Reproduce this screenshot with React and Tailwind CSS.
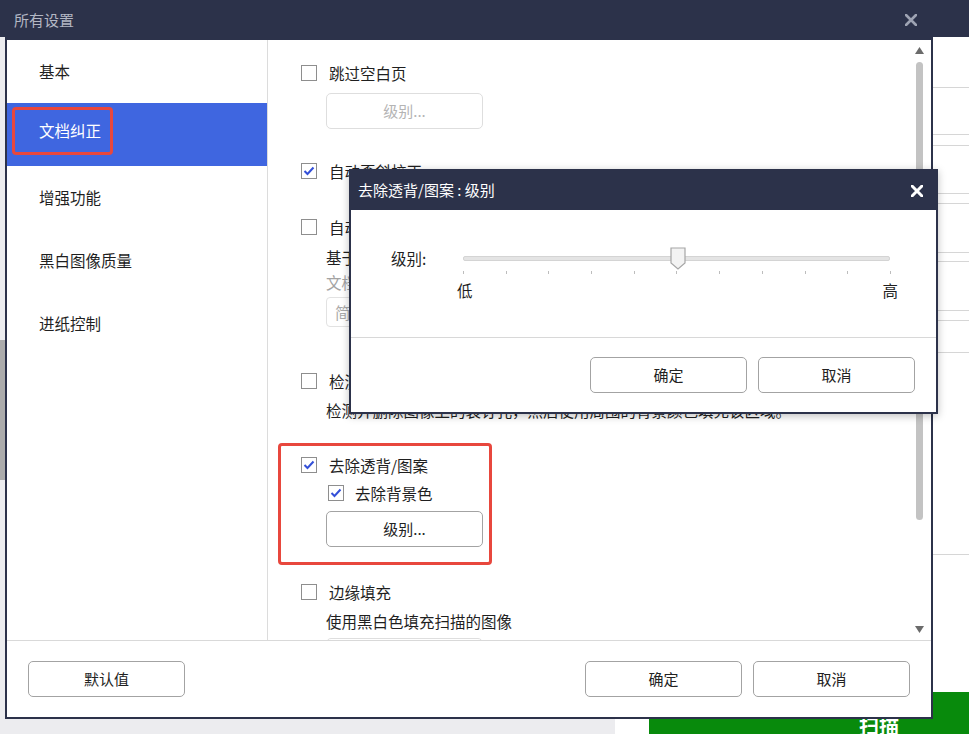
import React from "react";

const NAVY = "bg-[#2c324a]";

function Check({ checked }) {
  return (
    <span className="w-4 h-4 shrink-0 border-[1.5px] border-[#8e8e8e] bg-white flex items-center justify-center">
      {checked && (
        <svg width="12" height="10" viewBox="0 0 12 10">
          <path d="M1.5 5 L4.5 8 L10.5 1.5" fill="none" stroke="#3450d8" strokeWidth="2" />
        </svg>
      )}
    </span>
  );
}

function Btn({ children, disabled, className = "" }) {
  return (
    <div
      className={
        "w-[157px] h-[36px] shrink-0 rounded-[5px] border bg-white flex items-center justify-center text-[15px] " +
        (disabled ? "border-[#dedede] text-[#b4b4b4] " : "border-[#a3a3a3] text-[#222] ") +
        className
      }
    >
      {children}
    </div>
  );
}

function XIcon({ color, w }) {
  return (
    <svg width="12" height="12" viewBox="0 0 12 12">
      <path d="M1 1 L11 11 M11 1 L1 11" stroke={color} strokeWidth={w} strokeLinecap="round" />
    </svg>
  );
}

export default function App() {
  const navItems = ["基本", "文档纠正", "增强功能", "黑白图像质量", "进纸控制"];
  const ticks = Array.from({ length: 11 });
  return (
    <div className="relative w-[969px] h-[734px] overflow-hidden bg-white font-['Noto_Sans_CJK_SC','Noto_Sans',sans-serif] text-[15.5px] text-[#1f1f1f]">
      {/* background application */}
      <div className="flex flex-col h-full">
        <div className={"h-[37px] shrink-0 " + NAVY} />
        <div className="flex flex-1">
          <div className="w-[615px] bg-[#ececef] flex flex-col">
            <div className="mt-[303px] h-[140px] w-[6px] bg-[#acacac]" />
          </div>
          <div className="flex-1 flex flex-col bg-white">
            <div className="h-[51px] shrink-0 border-b border-[#d6d6d6]" />
            <div className="h-[47px] shrink-0 border-b border-[#d6d6d6]" />
            <div className="h-[11px] shrink-0 border-b border-[#d6d6d6]" />
            <div className="h-[48px] shrink-0 border-b border-[#d6d6d6]" />
            <div className="h-[10px] shrink-0 border-b border-[#d6d6d6]" />
            <div className="h-[49px] shrink-0 border-b border-[#d6d6d6]" />
            <div className="h-[9px] shrink-0 border-b border-[#d6d6d6]" />
            <div className="h-[49px] shrink-0 border-b border-[#d6d6d6]" />
            <div className="h-[10px] shrink-0 border-b border-[#d6d6d6]" />
            <div className="h-[32px] shrink-0 border-b border-[#d6d6d6]" />
            <div className="h-[202px] shrink-0 border-b border-[#d6d6d6]" />
            <div className="mt-auto ml-[34px] h-[42px] shrink-0 bg-[#088a0c] pl-[210px] pt-[24px]">
              <span className="text-white text-[20px] font-bold leading-[20px]">扫描</span>
            </div>
          </div>
        </div>
      </div>

      {/* main settings dialog */}
      <div className="absolute left-[5px] top-0 w-[928px] h-[719px] border-2 border-t-0 border-[#2c324a] bg-white flex flex-col">
        <div className={"h-[40px] shrink-0 flex items-center justify-between pl-[7px] pr-[14px] " + NAVY}>
          <span className="text-[#b3b7c4] text-[15px]">所有设置</span>
          <XIcon color="#9ea3b3" w="2.6" />
        </div>
        <div className="flex h-[601px] shrink-0 border-b border-[#d9d9d9]">
          {/* sidebar */}
          <div className="w-[261px] shrink-0 border-r border-[#dcdcdc] flex flex-col">
            {navItems.map((t, i) =>
              i === 1 ? (
                <div key={t} className="h-[63px] shrink-0 bg-[#3f66e0] flex items-start">
                  <span className="mt-[4px] ml-[5px] h-[48px] pl-[24px] pr-[9px] border-[3px] border-[#e8473d] rounded-[4px] flex items-center text-white">
                    {t}
                  </span>
                </div>
              ) : (
                <div key={t} className="h-[63px] shrink-0 flex items-center pl-[32px]">
                  {t}
                </div>
              )
            )}
          </div>
          {/* content */}
          <div className="flex-1 flex overflow-hidden">
            <div className="flex-1 flex flex-col pl-[33px] pt-[22px] leading-[22px] overflow-hidden">
              <div className="h-[22px] shrink-0 flex items-center gap-[12px]">
                <Check />
                <span>跳过空白页</span>
              </div>
              <Btn disabled className="ml-[25px] mt-[9px]">级别...</Btn>

              <div className="h-[22px] shrink-0 mt-[31px] flex items-center gap-[12px]">
                <Check checked />
                <span>自动歪斜校正</span>
              </div>

              <div className="h-[22px] shrink-0 mt-[34px] flex items-center gap-[12px]">
                <Check />
                <span>自动旋转图像</span>
              </div>
              <div className="shrink-0 ml-[25px] mt-[7px] leading-[25px]">基于文本内容自动旋转图像</div>
              <div className="shrink-0 ml-[25px] leading-[25px] text-[#a3a3a3]">文档语言</div>
              <div className="shrink-0 ml-[25px] mt-[2px] w-[157px] h-[30px] rounded-[4px] border border-[#e2e2e2] flex items-center pl-[8px] text-[#aaaaaa]">
                简体中文
              </div>

              <div className="h-[22px] shrink-0 mt-[43px] flex items-center gap-[12px]">
                <Check />
                <span>检测装订孔</span>
              </div>
              <div className="shrink-0 ml-[25px] mt-[6px] leading-[24px]">
                检测并删除图像上的装订孔，然后使用周围的背景颜色填充该区域。
              </div>

              <div className="ml-[-23px] mt-[21px] w-[214px] h-[122px] shrink-0 border-[3px] border-[#e8473d] rounded-[4px] pl-[20px] pt-[8px] flex flex-col">
                <div className="h-[22px] shrink-0 flex items-center gap-[12px]">
                  <Check checked />
                  <span>去除透背/图案</span>
                </div>
                <div className="h-[22px] shrink-0 mt-[6px] ml-[27px] flex items-center gap-[11px]">
                  <Check checked />
                  <span>去除背景色</span>
                </div>
                <Btn className="ml-[25px] mt-[7px]">级别...</Btn>
              </div>

              <div className="h-[22px] shrink-0 mt-[16px] flex items-center gap-[12px]">
                <Check />
                <span>边缘填充</span>
              </div>
              <div className="shrink-0 ml-[25px] mt-[6px] leading-[24px]">使用黑白色填充扫描的图像</div>
              <Btn className="ml-[25px] mt-[5px] border-[#dedede]">级别...</Btn>
            </div>
            {/* scrollbar */}
            <div className="w-[16px] mr-[4px] shrink-0 flex flex-col items-center pt-[7px] pb-[7px]">
              <svg width="9" height="7" viewBox="0 0 9 7">
                <path d="M4.5 0 L9 7 L0 7 Z" fill="#6b6b6b" />
              </svg>
              <div className="mt-[8px] w-[7px] h-[458px] shrink-0 rounded-full bg-[#c3c3c3]" />
              <div className="flex-1" />
              <svg width="9" height="7" viewBox="0 0 9 7">
                <path d="M0 0 L9 0 L4.5 7 Z" fill="#6b6b6b" />
              </svg>
            </div>
          </div>
        </div>
        {/* footer */}
        <div className="flex-1 flex items-center pl-[21px] pr-[21px]">
          <Btn>默认值</Btn>
          <div className="flex-1" />
          <Btn>确定</Btn>
          <Btn className="ml-[11px]">取消</Btn>
        </div>
      </div>

      {/* level modal */}
      <div className="absolute left-[349px] top-[169px] w-[589px] h-[245px] border-2 border-[#2c324a] bg-white flex flex-col shadow-[0_2px_8px_rgba(0,0,0,0.25)]">
        <div className={"h-[39px] shrink-0 flex items-center justify-between pl-[7px] pr-[13px] " + NAVY}>
          <span className="text-white text-[15px]">去除透背/图案 : 级别</span>
          <XIcon color="#ffffff" w="3" />
        </div>
        <div className="h-[128px] shrink-0 border-b border-[#d8d8d8] flex flex-col pt-[37px] pl-[40px]">
          <div className="h-[22px] shrink-0 flex items-center">
            <span className="w-[72px] shrink-0 leading-[22px]">级别:</span>
            <div className="relative w-[427px] h-[5px] shrink-0 bg-[#e4e4e4] border border-[#d4d4d4] rounded-[2px]">
              <svg className="absolute left-[206px] top-[-10px]" width="16" height="23" viewBox="0 0 16 23">
                <path d="M1 1 H15 V16 L8 22 L1 16 Z" fill="#f3f3f3" stroke="#a6a6a6" strokeWidth="1.2" />
              </svg>
            </div>
          </div>
          <div className="ml-[72px] mt-[2px] w-[428px] h-[3px] shrink-0 flex justify-between">
            {ticks.map((_, i) => (
              <div key={i} className="w-px h-[3px] bg-[#bdbdbd]" />
            ))}
          </div>
          <div className="ml-[66px] mt-[6px] w-[441px] shrink-0 flex justify-between leading-[20px]">
            <span>低</span>
            <span>高</span>
          </div>
        </div>
        <div className="flex-1 flex items-center justify-end pr-[21px]">
          <Btn className="w-[156px] h-[35px]">确定</Btn>
          <Btn className="w-[156px] h-[35px] ml-[11px]">取消</Btn>
        </div>
      </div>
    </div>
  );
}
